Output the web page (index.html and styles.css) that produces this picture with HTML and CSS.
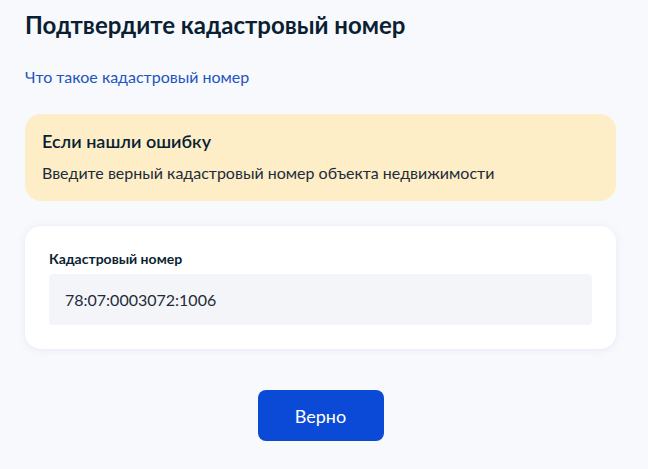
FILE: index.html
```html
<!DOCTYPE html>
<html lang="ru">
<head>
<meta charset="utf-8">
<link rel="stylesheet" href="styles.css">
</head>
<body>
<div class="page">
  <h1 class="title">Подтвердите кадастровый номер</h1>
  <a class="link" href="#">Что такое кадастровый номер</a>
  <div class="notice">
    <div class="notice-title">Если нашли ошибку</div>
    <div class="notice-text">Введите верный кадастровый номер объекта недвижимости</div>
  </div>
  <div class="card">
    <div class="label">Кадастровый номер</div>
    <div class="field">78:07:0003072:1006</div>
  </div>
  <div class="actions">
    <button class="btn">Верно</button>
  </div>
</div>
</body>
</html>
```

FILE: styles.css
```css
html, body {
  margin: 0;
  padding: 0;
}
body {
  background: #f8f9fd;
  font-family: Lato, "Noto Sans", sans-serif;
  color: #0b1f33;
  width: 648px;
  height: 469px;
  overflow: hidden;
}
.page {
  padding: 9px 32px 0 25px;
  display: flex;
  flex-direction: column;
}
.title {
  margin: 0;
  font-size: 24px;
  font-weight: 700;
  line-height: 32px;
  color: #0b1f33;
}
.link {
  margin-top: 26px;
  font-size: 16px;
  line-height: 20px;
  color: #2254bf;
  text-decoration: none;
  align-self: flex-start;
}
.notice {
  margin-top: 27px;
  background: #fdeec8;
  border-radius: 16px;
  padding: 14px 17px 0 17px;
  height: 87px;
  box-sizing: border-box;
}
.notice-title {
  font-size: 18px;
  font-weight: 600;
  line-height: 26px;
  color: #0b1f33;
}
.notice-text {
  margin-top: 8px;
  font-size: 16px;
  line-height: 22px;
  color: #1d2b3a;
}
.card {
  margin-top: 25px;
  background: #ffffff;
  border-radius: 16px;
  box-shadow: 0 1px 8px rgba(150, 165, 200, 0.18);
  padding: 24px 24px 0 24px;
  height: 123px;
  box-sizing: border-box;
}
.label {
  font-size: 14px;
  font-weight: 700;
  line-height: 18px;
}
.field {
  margin-top: 6px;
  background: #f4f5f8;
  border-radius: 4px;
  height: 51px;
  padding: 0 16px;
  display: flex;
  align-items: center;
  font-size: 16px;
  color: #1d2b3a;
}
.actions {
  margin-top: 41px;
  display: flex;
  justify-content: center;
}
.btn {
  width: 126px;
  height: 51px;
  border: none;
  border-radius: 8px;
  background: #0b4ad6;
  color: #ffffff;
  font-family: Lato, "Noto Sans", sans-serif;
  font-size: 18px;
  font-weight: 400;
}
```
